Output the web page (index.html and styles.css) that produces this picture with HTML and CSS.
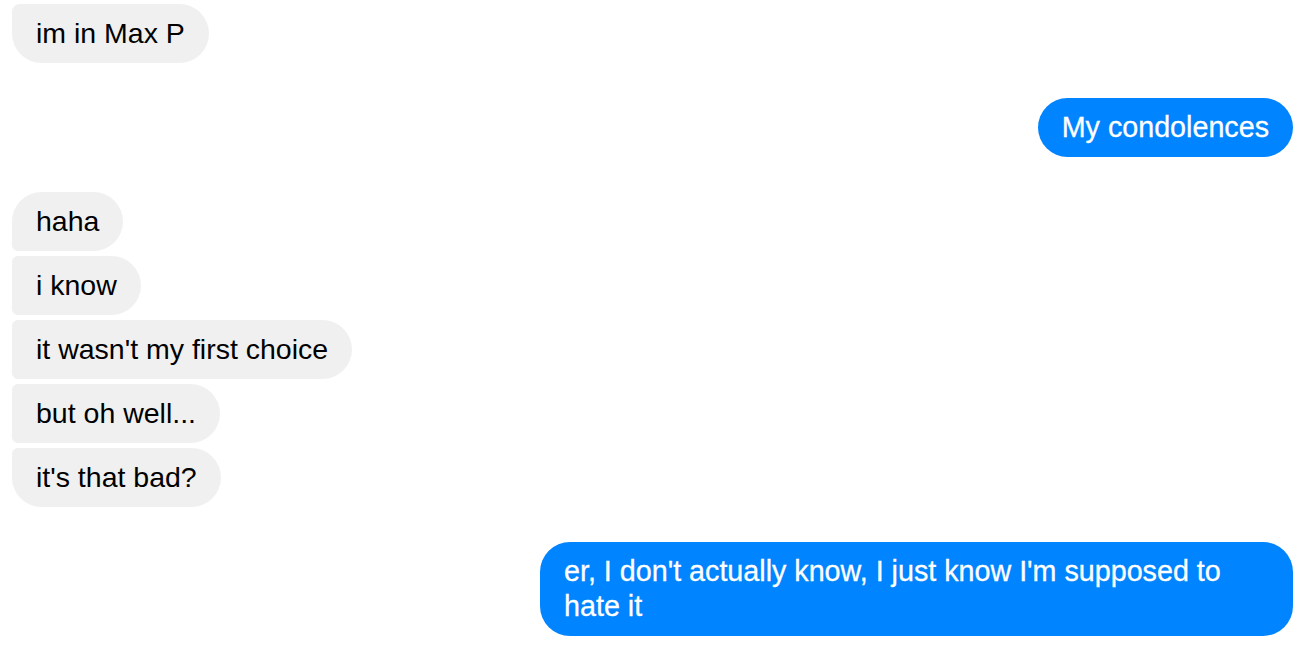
FILE: index.html
```html
<!DOCTYPE html>
<html>
<head>
<meta charset="utf-8">
<link rel="stylesheet" href="styles.css">
</head>
<body>
<div class="thread">
  <div class="group incoming">
    <div class="bubble only-last">im in Max P</div>
  </div>
  <div class="group outgoing">
    <div class="bubble single">My condolences</div>
  </div>
  <div class="group incoming">
    <div class="bubble first">haha</div>
    <div class="bubble middle">i know</div>
    <div class="bubble middle">it wasn't my first choice</div>
    <div class="bubble middle">but oh well...</div>
    <div class="bubble last">it's that bad?</div>
  </div>
  <div class="group outgoing">
    <div class="bubble single wide">er, I don't actually know, I just know I'm supposed to hate it</div>
  </div>
</div>
</body>
</html>
```

FILE: styles.css
```css
html, body {
  margin: 0;
  padding: 0;
  background: #ffffff;
}
body {
  font-family: "Liberation Sans", Arial, Helvetica, sans-serif;
  font-size: 28.5px;
  line-height: 35px;
}
.thread {
  display: flex;
  flex-direction: column;
  gap: 35px;
  padding: 4px 11px 0 12px;
}
.group {
  display: flex;
  flex-direction: column;
  gap: 5px;
}
.incoming {
  align-items: flex-start;
}
.outgoing {
  align-items: flex-end;
}
.bubble {
  padding: 12px 24px;
  border-radius: 30px;
  max-width: 705px;
}
.incoming .bubble {
  background: #f1f0f0;
  color: #000000;
}
.outgoing .bubble {
  background: #0084ff;
  color: #ffffff;
  font-size: 28.7px;
  -webkit-text-stroke: 0.3px #ffffff;
}
.incoming .only-last {
  border-top-left-radius: 8px;
}
.incoming .first {
  border-bottom-left-radius: 6px;
}
.incoming .middle {
  border-top-left-radius: 6px;
  border-bottom-left-radius: 6px;
}
.incoming .last {
  border-top-left-radius: 6px;
}
```
